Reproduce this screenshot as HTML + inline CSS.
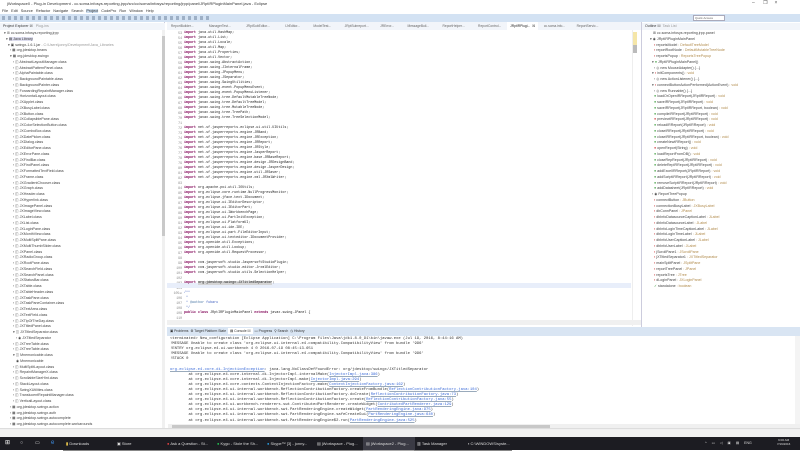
<!DOCTYPE html>
<html><head><meta charset="utf-8"><style>
*{margin:0;padding:0;box-sizing:border-box}
body{width:800px;height:450px;overflow:hidden;background:#fff;font-family:"Liberation Sans",sans-serif;position:relative;color:#222}
.a{position:absolute}
.sm{font-size:3.6px;line-height:5.75px;white-space:pre;color:#444}
.code{font-family:"Liberation Mono",monospace;font-size:3.35px;line-height:5px;white-space:pre;color:#222}
.k{color:#7f0055;font-weight:bold}
.ln{color:#888;text-align:right;font-family:"Liberation Mono",monospace;font-size:3.2px;line-height:5px;white-space:pre}
.g{color:#999}
.lk{color:#3a6ad8;text-decoration:underline;text-decoration-color:#9ab}
.task{color:#ddd;font-size:4px;line-height:13px;white-space:nowrap}
</style></head><body>
<div class="a" style="left:0;top:0;width:800px;height:8px;background:#fff;font-size:4px;line-height:8px;padding-left:7px;color:#333">jWorkspace0 - Plug-in Development - cc.soma.infosys.reporting.jrpp/src/cc/soma/infosys/reporting/jrpp/panel/JRptIRPluginMainPanel.java - Eclipse</div>
<div class="a" style="left:752px;top:0;font-size:5px;line-height:7px;color:#555">–&nbsp;&nbsp;&nbsp;&nbsp;&nbsp;&nbsp;❐&nbsp;&nbsp;&nbsp;&nbsp;&nbsp;×</div>
<div class="a" style="left:0;top:8px;width:800px;height:6px;background:#fff;font-size:3.8px;line-height:6px;padding-left:2px;color:#333;word-spacing:2px">File Edit Source Refactor Navigate Search <span style="background:#cde">Project</span> CodePro Run Window Help</div>
<div class="a" style="left:0;top:14px;width:800px;height:8px;background:#d3e2f3"></div>
<div class="a" style="left:2px;top:16px;width:210px;height:4px;background:repeating-linear-gradient(90deg,#7a8fa8 0 3px,transparent 3px 6px);opacity:.6"></div>
<div class="a" style="left:693px;top:15px;width:32px;height:6px;background:#fff;border:1px solid #aab;font-size:3px;line-height:4px;color:#666;padding-left:1px">Quick Access</div>
<div class="a" style="left:0;top:22px;width:165px;height:408px;background:#fff;border-right:1px solid #ccd"></div>
<div class="a" style="left:0;top:23px;width:165px;height:7px;background:#f2f5fa;font-size:3.6px;line-height:7px;padding-left:3px;color:#333">Project Explorer ☒ &nbsp;&nbsp;<span class="g">Plug-ins</span></div>
<div class="a" style="left:162px;top:30px;width:3px;height:398px;background:#f0f0f0"></div>
<div class="a" style="left:162px;top:36px;width:3px;height:200px;background:#c9c9c9"></div>
<div class="a sm" style="left:4px;top:31px">▾ <span style="color:#555">⊞</span> cc.soma.infosys.reporting.jrpp
  ▾ <span style="background:#dde">▤ Java Library</span>
    ▾ ▣ swingx-1.6.1.jar <span class="g">- C:\Users\jonny\Development\Java_Libraries</span>
      › ▦ org.jdesktop.beans
      ▾ ▦ org.jdesktop.swingx
         › ◫ AbstractLayoutManager.class
         › ◫ AbstractPatternPanel.class
         › ◫ AlphaPaintable.class
         › ◫ BackgroundPaintable.class
         › ◫ BackgroundPainter.class
         › ◫ ForwardingRepaintManager.class
         › ◫ HorizontalLayout.class
         › ◫ JXApplet.class
         › ◫ JXBusyLabel.class
         › ◫ JXButton.class
         › ◫ JXCollapsiblePane.class
         › ◫ JXColorSelectionButton.class
         › ◫ JXComboBox.class
         › ◫ JXDatePicker.class
         › ◫ JXDialog.class
         › ◫ JXEditorPane.class
         › ◫ JXErrorPane.class
         › ◫ JXFindBar.class
         › ◫ JXFindPanel.class
         › ◫ JXFormattedTextField.class
         › ◫ JXFrame.class
         › ◫ JXGradientChooser.class
         › ◫ JXGraph.class
         › ◫ JXHeader.class
         › ◫ JXHyperlink.class
         › ◫ JXImagePanel.class
         › ◫ JXImageView.class
         › ◫ JXLabel.class
         › ◫ JXList.class
         › ◫ JXLoginPane.class
         › ◫ JXMonthView.class
         › ◫ JXMultiSplitPane.class
         › ◫ JXMultiThumbSlider.class
         › ◫ JXPanel.class
         › ◫ JXRadioGroup.class
         › ◫ JXRootPane.class
         › ◫ JXSearchField.class
         › ◫ JXSearchPanel.class
         › ◫ JXStatusBar.class
         › ◫ JXTable.class
         › ◫ JXTableHeader.class
         › ◫ JXTaskPane.class
         › ◫ JXTaskPaneContainer.class
         › ◫ JXTextArea.class
         › ◫ JXTextField.class
         › ◫ JXTipOfTheDay.class
         › ◫ JXTitledPanel.class
         ▾ ◫ JXTitledSeparator.class
            › ◉ JXTitledSeparator
         › ◫ JXTreeTable.class
         › ◫ JXTreeTable.class
         ▾ ◫ Mnemonicable.class
            ◉ Mnemonicable
         › ◫ MultiSplitLayout.class
         › ◫ RepaintManagerX.class
         › ◫ ScrollableSizeHint.class
         › ◫ StackLayout.class
         › ◫ SwingXUtilities.class
         › ◫ TranslucentRepaintManager.class
         › ◫ VerticalLayout.class
      › ▦ org.jdesktop.swingx.action
      › ▦ org.jdesktop.swingx.auth
      › ▦ org.jdesktop.swingx.autocomplete
      › ▦ org.jdesktop.swingx.autocomplete.workarounds</div>
<div class="a" style="left:167px;top:22px;width:475px;height:8px;background:#f2f5fa;font-size:3.3px;line-height:8px;color:#666;white-space:nowrap;word-spacing:1px">&nbsp;&nbsp;ReportBuilder... &nbsp;&nbsp;&nbsp;&nbsp;&nbsp;&nbsp;&nbsp;ManagerTest... &nbsp;&nbsp;&nbsp;&nbsp;&nbsp;&nbsp;&nbsp;JRptSubEditor... &nbsp;&nbsp;&nbsp;&nbsp;&nbsp;&nbsp;&nbsp;IJrEditor... &nbsp;&nbsp;&nbsp;&nbsp;&nbsp;&nbsp;ModelTest... &nbsp;&nbsp;&nbsp;&nbsp;&nbsp;&nbsp;JRptSubreport... &nbsp;&nbsp;&nbsp;&nbsp;&nbsp;JRError... &nbsp;&nbsp;&nbsp;&nbsp;&nbsp;&nbsp;MessageBuil... &nbsp;&nbsp;&nbsp;&nbsp;&nbsp;&nbsp;ReportHelper... &nbsp;&nbsp;&nbsp;&nbsp;&nbsp;&nbsp;ReportControl... &nbsp;&nbsp;<span style="background:#fff;color:#222;padding:2px 3px">JRptIRPlugi... ☒</span> &nbsp;&nbsp;cc.soma.info... &nbsp;&nbsp;&nbsp;&nbsp;&nbsp;ReportServic...</div>
<div class="a ln" style="left:168px;top:31px;width:14px">53
54
55
56
57
58
59
60
61
62
63
64
65
66
67
68
69
70
71
72
73
74
75
76
77
78
79
80
81
82
83
84
85
86
87
88
89
90
91
92
93
94
95
96
97
98
99
100
101
102
103
104
105⊖
106
107
108
109
110</div>
<div class="a" style="left:167px;top:283px;width:464px;height:5px;background:#e8eefa"></div>
<div class="a code" style="left:184px;top:31px"><span class="k">import</span> java.util.HashMap;
<span class="k">import</span> java.util.List;
<span class="k">import</span> java.util.Locale;
<span class="k">import</span> java.util.Map;
<span class="k">import</span> java.util.Properties;
<span class="k">import</span> java.util.Vector;
<span class="k">import</span> javax.swing.AbstractAction;
<span class="k">import</span> javax.swing.JInternalFrame;
<span class="k">import</span> javax.swing.JPopupMenu;
<span class="k">import</span> javax.swing.JSeparator;
<span class="k">import</span> javax.swing.SwingUtilities;
<span class="k">import</span> javax.swing.event.PopupMenuEvent;
<span class="k">import</span> javax.swing.event.PopupMenuListener;
<span class="k">import</span> javax.swing.tree.DefaultMutableTreeNode;
<span class="k">import</span> javax.swing.tree.DefaultTreeModel;
<span class="k">import</span> javax.swing.tree.MutableTreeNode;
<span class="k">import</span> javax.swing.tree.TreePath;
<span class="k">import</span> javax.swing.tree.TreeSelectionModel;

<span class="k">import</span> net.sf.jasperreports.eclipse.ui.util.UIUtils;
<span class="k">import</span> net.sf.jasperreports.engine.JRBand;
<span class="k">import</span> net.sf.jasperreports.engine.JRException;
<span class="k">import</span> net.sf.jasperreports.engine.JRReport;
<span class="k">import</span> net.sf.jasperreports.engine.JRStyle;
<span class="k">import</span> net.sf.jasperreports.engine.JasperReport;
<span class="k">import</span> net.sf.jasperreports.engine.base.JRBaseReport;
<span class="k">import</span> net.sf.jasperreports.engine.design.JRDesignBand;
<span class="k">import</span> net.sf.jasperreports.engine.design.JasperDesign;
<span class="k">import</span> net.sf.jasperreports.engine.util.JRSaver;
<span class="k">import</span> net.sf.jasperreports.engine.xml.JRXmlWriter;

<span class="k">import</span> org.apache.poi.util.IOUtils;
<span class="k">import</span> org.eclipse.core.runtime.NullProgressMonitor;
<span class="k">import</span> org.eclipse.jface.text.IDocument;
<span class="k">import</span> org.eclipse.ui.IEditorDescriptor;
<span class="k">import</span> org.eclipse.ui.IEditorPart;
<span class="k">import</span> org.eclipse.ui.IWorkbenchPage;
<span class="k">import</span> org.eclipse.ui.PartInitException;
<span class="k">import</span> org.eclipse.ui.PlatformUI;
<span class="k">import</span> org.eclipse.ui.ide.IDE;
<span class="k">import</span> org.eclipse.ui.part.FileEditorInput;
<span class="k">import</span> org.eclipse.ui.texteditor.IDocumentProvider;
<span class="k">import</span> org.openide.util.Exceptions;
<span class="k">import</span> org.openide.util.Lookup;
<span class="k">import</span> org.openide.util.RequestProcessor;

<span class="k">import</span> com.jaspersoft.studio.JaspersoftStudioPlugin;
<span class="k">import</span> com.jaspersoft.studio.editor.JrxmlEditor;
<span class="k">import</span> com.jaspersoft.studio.utils.SelectionHelper;

<span class="k">import</span> <span style="background:#d4d4d4">org.jdesktop.swingx.JXTitledSeparator</span>;

<span style="color:#3f5fbf">/**</span>
<span style="color:#3f5fbf"> *</span>
<span style="color:#3f5fbf"> * <b style="color:#7f9fbf">@author</b> fubaru</span>
<span style="color:#3f5fbf"> */</span>
<span class="k">public class</span> JRptIRPluginMainPanel <span class="k">extends</span> javax.swing.JPanel {
</div>
<div class="a" style="left:632px;top:30px;width:1px;height:296px;background:#eee"></div>
<div class="a" style="left:633px;top:32px;width:4px;height:16px;background:#f5e6a8"></div>
<div class="a" style="left:633px;top:45px;width:4px;height:8px;background:#bbb"></div>
<div class="a" style="left:167px;top:320px;width:475px;height:5px;background:#f0f0f0"></div>
<div class="a" style="left:641px;top:22px;width:1px;height:306px;background:#ccd"></div>
<div class="a" style="left:642px;top:23px;width:158px;height:7px;background:#f2f5fa;font-size:3.6px;line-height:7px;padding-left:3px;color:#333">Outline ☒ &nbsp;<span class="g">Task List</span></div>
<div class="a sm" style="left:650px;top:31px">   ⊞ cc.soma.infosys.reporting.jrpp.panel
▾ ◉ JRptIRPluginMainPanel
    <span style="color:#c33">▪</span> reportsModel <span style="color:#b08a4a">: DefaultTreeModel</span>
    <span style="color:#c33">▪</span> reportRootNode <span style="color:#b08a4a">: DefaultMutableTreeNode</span>
    <span style="color:#c33">▪</span> reportsPopup <span style="color:#b08a4a">: ReportsTreePopup</span>
  ▾ <span style="color:#393">●</span> JRptIRPluginMainPanel()
    › ◎ new MouseAdapter() {...}
  ▾ <span style="color:#c33">▪</span> initComponents() <span style="color:#b08a4a">: void</span>
    › ◎ new ActionListener() {...}
  ▾ <span style="color:#c33">▪</span> connectButtonActionPerformed(ActionEvent) <span style="color:#b08a4a">: void</span>
    › ◎ new Runnable() {...}
    <span style="color:#393">●</span> loadOrOpenIRReport(JRptIRReport) <span style="color:#b08a4a">: void</span>
    <span style="color:#393">●</span> saveIRReport(JRptIRReport) <span style="color:#b08a4a">: void</span>
    <span style="color:#393">●</span> saveIRReport(JRptIRReport, boolean) <span style="color:#b08a4a">: void</span>
    <span style="color:#393">●</span> compileIRReport(JRptIRReport) <span style="color:#b08a4a">: void</span>
    <span style="color:#c33">●</span> previewIRReport(JRptIRReport) <span style="color:#b08a4a">: void</span>
    <span style="color:#393">●</span> reloadIRReport(JRptIRReport) <span style="color:#b08a4a">: void</span>
    <span style="color:#393">●</span> closeIRReport(JRptIRReport) <span style="color:#b08a4a">: void</span>
    <span style="color:#393">●</span> closeIRReport(JRptIRReport, boolean) <span style="color:#b08a4a">: void</span>
    <span style="color:#393">●</span> createNewIRReport() <span style="color:#b08a4a">: void</span>
    <span style="color:#c33">●</span> openReport(String) <span style="color:#b08a4a">: void</span>
    <span style="color:#393">●</span> loadReportFromDB() <span style="color:#b08a4a">: void</span>
    <span style="color:#393">●</span> closeRepReport(JRptIRReport) <span style="color:#b08a4a">: void</span>
    <span style="color:#393">●</span> deleteRepIRReport(JRptIRReport) <span style="color:#b08a4a">: void</span>
    <span style="color:#393">●</span> addExcelIRReport(JRptIRReport) <span style="color:#b08a4a">: void</span>
    <span style="color:#393">●</span> addScriptIRReport(JRptIRReport) <span style="color:#b08a4a">: void</span>
    <span style="color:#393">●</span> removeScriptIRReport(JRptIRReport) <span style="color:#b08a4a">: void</span>
    <span style="color:#393">●</span> addDatasheet(JRptIRReport) <span style="color:#b08a4a">: void</span>
  › ◉ ReportTreePopup
    <span style="color:#c33">▪</span> connectButton <span style="color:#b08a4a">: JButton</span>
    <span style="color:#c33">▪</span> connectionBusyLabel <span style="color:#b08a4a">: JXBusyLabel</span>
    <span style="color:#c33">▪</span> dbConnPanel <span style="color:#b08a4a">: JPanel</span>
    <span style="color:#c33">▪</span> dbInfoDatasourceCaptionLabel <span style="color:#b08a4a">: JLabel</span>
    <span style="color:#c33">▪</span> dbInfoDatasourceLabel <span style="color:#b08a4a">: JLabel</span>
    <span style="color:#c33">▪</span> dbInfoLoginTimeCaptionLabel <span style="color:#b08a4a">: JLabel</span>
    <span style="color:#c33">▪</span> dbInfoLoginTimeLabel <span style="color:#b08a4a">: JLabel</span>
    <span style="color:#c33">▪</span> dbInfoUserCaptionLabel <span style="color:#b08a4a">: JLabel</span>
    <span style="color:#c33">▪</span> dbInfoUserLabel <span style="color:#b08a4a">: JLabel</span>
    <span style="color:#c33">▪</span> jScrollPane1 <span style="color:#b08a4a">: JScrollPane</span>
    <span style="color:#c33">▪</span> jXTitledSeparator1 <span style="color:#b08a4a">: JXTitledSeparator</span>
    <span style="color:#c33">▪</span> mainSplitPanel <span style="color:#b08a4a">: JSplitPane</span>
    <span style="color:#c33">▪</span> reportTreePanel <span style="color:#b08a4a">: JPanel</span>
    <span style="color:#c33">▪</span> reportsTree <span style="color:#b08a4a">: JTree</span>
    <span style="color:#c33">▪</span> dLoginPanel <span style="color:#b08a4a">: JXLoginPanel</span>
    <span style="color:#393">✓</span> standalone <span style="color:#b08a4a">: boolean</span></div>
<div class="a" style="left:167px;top:327px;width:633px;height:9px;background:#d9e5f3"></div>
<div class="a" style="left:170px;top:328px;font-size:3.4px;line-height:7px;color:#333;white-space:nowrap">▣ Problems &nbsp;<span>⚙ Target Platform State</span> &nbsp;<span style="background:#fff;padding:1px 2px">▤ Console ☒</span> &nbsp;▭ Progress &nbsp;⚲ Search &nbsp;◷ History</div>
<div class="a" style="left:168px;top:336px;width:632px;height:92px;background:#fff"></div>
<div class="a code" style="left:170px;top:337px;line-height:5.1px;font-size:3.85px;color:#333">&lt;terminated&gt; New_configuration [Eclipse Application] C:\Program Files\Java\jdk1.8.0_91\bin\javaw.exe (Jul 19, 2016, 8:44:16 AM)
!MESSAGE Unable to create class 'org.eclipse.ui.internal.e4.compatibility.CompatibilityView' from bundle '996'
!ENTRY org.eclipse.e4.ui.workbench 4 0 2016-07-19 08:45:13.651
!MESSAGE Unable to create class 'org.eclipse.ui.internal.e4.compatibility.CompatibilityView' from bundle '996'
!STACK 0

<span class="lk">org.eclipse.e4.core.di.InjectionException</span>: java.lang.NoClassDefFoundError: org/jdesktop/swingx/JXTitledSeparator
        at org.eclipse.e4.core.internal.di.InjectorImpl.internalMake(<span class="lk">InjectorImpl.java:386</span>)
        at org.eclipse.e4.core.internal.di.InjectorImpl.make(<span class="lk">InjectorImpl.java:294</span>)
        at org.eclipse.e4.core.contexts.ContextInjectionFactory.make(<span class="lk">ContextInjectionFactory.java:162</span>)
        at org.eclipse.e4.ui.internal.workbench.ReflectionContributionFactory.createFromBundle(<span class="lk">ReflectionContributionFactory.java:104</span>)
        at org.eclipse.e4.ui.internal.workbench.ReflectionContributionFactory.doCreate(<span class="lk">ReflectionContributionFactory.java:73</span>)
        at org.eclipse.e4.ui.internal.workbench.ReflectionContributionFactory.create(<span class="lk">ReflectionContributionFactory.java:55</span>)
        at org.eclipse.e4.ui.workbench.renderers.swt.ContributedPartRenderer.createWidget(<span class="lk">ContributedPartRenderer.java:129</span>)
        at org.eclipse.e4.ui.internal.workbench.swt.PartRenderingEngine.createWidget(<span class="lk">PartRenderingEngine.java:975</span>)
        at org.eclipse.e4.ui.internal.workbench.swt.PartRenderingEngine.safeCreateGui(<span class="lk">PartRenderingEngine.java:640</span>)
        at org.eclipse.e4.ui.internal.workbench.swt.PartRenderingEngine$2.run(<span class="lk">PartRenderingEngine.java:525</span>)</div>
<div class="a" style="left:168px;top:424px;width:632px;height:4px;background:#f0f0f0"></div>
<div class="a" style="left:172px;top:425px;width:378px;height:3px;background:#c8c8c8"></div>
<div class="a" style="left:795px;top:336px;width:5px;height:88px;background:#f4f4f4"></div>
<div class="a" style="left:0;top:428px;width:800px;height:9px;background:#f0f0f0;border-top:1px solid #ddd"></div>
<div class="a" style="left:0;top:437px;width:800px;height:13px;background:#1c1c22"></div>
<div class="a task" style="left:0;top:437px;width:800px;height:13px">
<span class="a" style="left:5px;color:#fff;font-size:6px">⊞</span>
<span class="a" style="left:20px;font-size:5px">○</span>
<span class="a" style="left:35px;font-size:5px">▭</span>
<span class="a" style="left:51px;color:#3b8be0;font-size:6px">e</span>
<span class="a" style="left:63px;width:51px;padding-left:3px;border-bottom:1px solid #888"><b style="color:#e8c44a">▮</b> Downloads</span>
<span class="a" style="left:114px;width:51px;padding-left:3px;border-bottom:1px solid #888">▣ Store</span>
<span class="a" style="left:164px;width:51px;padding-left:3px;border-bottom:1px solid #888"><b style="color:#e44">●</b> Ask a Question - St...</span>
<span class="a" style="left:214px;width:51px;padding-left:3px;border-bottom:1px solid #888"><b style="color:#2c5">●</b> Kygo - Stole the Sh...</span>
<span class="a" style="left:264px;width:51px;padding-left:3px;border-bottom:1px solid #888"><b style="color:#2aa3e8">●</b> Skype™ [3] - jonny...</span>
<span class="a" style="left:314px;width:51px;padding-left:3px;border-bottom:1px solid #888">▤ jWorkspace - Plug...</span>
<span class="a" style="left:363px;width:52px;padding-left:3px;background:#3a3a44;border-bottom:1px solid #aaa">▤ jWorkspace2 - Plug...</span>
<span class="a" style="left:414px;width:51px;padding-left:3px;border-bottom:1px solid #888">▥ Task Manager</span>
<span class="a" style="left:465px;width:47px;padding-left:3px;border-bottom:1px solid #888">▪ C:\WINDOWS\syste...</span>
<span class="a" style="left:705px;font-size:3.5px;word-spacing:4px">^ ▭ ◁ ▣ ▤ ENG</span>
<span class="a" style="left:777px;top:1px;font-size:3px;line-height:4px;text-align:center">9:00 AM<br>7/19/2016</span>
</div>
</body></html>
